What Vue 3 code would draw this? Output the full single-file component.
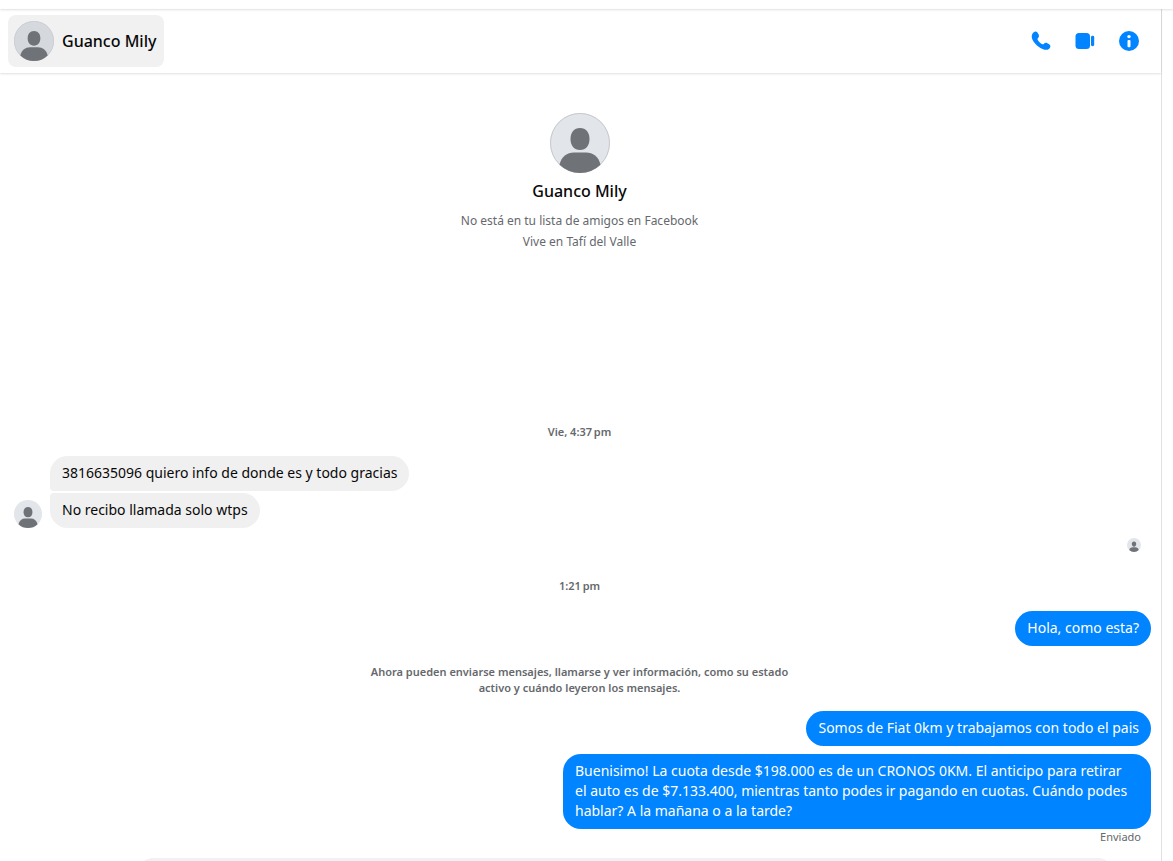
<script setup>
import { h, ref } from "vue";

const contact = {
  name: "Guanco Mily",
  details: ["No está en tu lista de amigos en Facebook", "Vive en Tafí del Valle"]
};

const draft = ref("");

const received = ["3816635096 quiero info de donde es y todo gracias", "No recibo llamada solo wtps"];

const sent = [
  "Somos de Fiat 0km y trabajamos con todo el pais",
  "Buenisimo! La cuota desde $198.000 es de un CRONOS 0KM. El anticipo para retirar el\u00a0auto es de $7.133.400, mientras tanto podes ir pagando en cuotas. Cuándo podes hablar? A la mañana o a la tarde?"
];

// generic silhouette used wherever the contact has no photo
const Avatar = (props) =>
  h("svg", { viewBox: "0 0 60 60", "aria-hidden": "true" }, [
    h("circle", { cx: 30, cy: 30, r: 30, fill: props.dim ? "#d5d8dc" : "#e2e5e9" }),
    h("path", {
      d: "M30 15c6 0 9.500 4.500 9.500 11S36 37 30 37s-9.500-4.500-9.500-11S24 15 30 15z",
      fill: "#6f7378"
    }),
    props.ring
      ? h("circle", { cx: 30, cy: 30, r: 29.5, fill: "none", stroke: "#c6c9cd", "stroke-width": 1 })
      : null,
    h("path", {
      d: "M24 39.500h12c7 0 12.500 4 14.500 12.200A29.900 29.900 0 0 1 30 60a29.900 29.900 0 0 1-20.500-8.300C11.500 43.500 17 39.500 24 39.500z",
      fill: "#6f7378"
    })
  ]);
Avatar.props = { ring: Boolean, dim: Boolean };
</script>

<template>
  <div class="page">
    <div class="top-strip"></div>
    <main class="chat">
      <header class="chat-header">
        <button type="button" class="contact">
          <Avatar class="avatar avatar-header" ring dim />
          <span>{{ contact.name }}</span>
        </button>
        <div class="actions">
          <button type="button" class="action" aria-label="Llamar">
            <svg viewBox="0 0 20 20">
              <path
                d="M1.900 2C3 .8 4.200.2 5.400.8c1.200.6 2 2 2.400 3.300.4 1.300 0 2.200-.8 3-.6.6-.6 1.200-.2 1.900 1 1.700 2.300 3 4 4 .7.4 1.300.5 1.900-.1.900-.9 1.800-1.400 3.100-1 1.400.4 2.900 1.300 3.400 2.500.5 1.300-.1 2.500-1.300 3.500-2.200 1.800-6.200.9-9.900-1.900C5.300 14 2.500 11.100 1.300 8.200.4 6.100.5 3.700 1.900 2z"
              />
            </svg>
          </button>
          <button type="button" class="action" aria-label="Videollamada">
            <svg viewBox="0 0 20 20">
              <rect x="0.5" y="2" width="14.5" height="16" rx="3.500" />
              <rect x="16" y="4.800" width="3.200" height="10.400" rx="1.400" />
            </svg>
          </button>
          <button type="button" class="action" aria-label="Información">
            <svg viewBox="0 0 20 20">
              <circle cx="10" cy="10" r="10" />
              <circle class="mark" cx="10" cy="5.600" r="1.700" />
              <rect class="mark" x="8.500" y="9" width="3" height="7.200" rx="1" />
            </svg>
          </button>
        </div>
      </header>

      <section class="feed">
        <div class="profile">
          <Avatar class="avatar avatar-profile" ring />
          <h1>{{ contact.name }}</h1>
          <p v-for="line in contact.details" :key="line">{{ line }}</p>
        </div>

        <time class="stamp stamp-first">Vie, 4:37&#8239;pm</time>
        <div class="received">
          <Avatar class="avatar avatar-message" />
          <div class="received-list">
            <div v-for="text in received" :key="text" class="bubble bubble-in">{{ text }}</div>
          </div>
        </div>
        <Avatar class="avatar avatar-seen" />

        <time class="stamp">1:21&#8239;pm</time>
        <div class="bubble bubble-out">Hola, como esta?</div>
        <p class="notice">
          Ahora pueden enviarse mensajes, llamarse y ver información, como su estado activo y cuándo
          leyeron los mensajes.
        </p>
        <div class="sent-list">
          <div v-for="text in sent" :key="text" class="bubble bubble-out">{{ text }}</div>
        </div>
        <span class="status">Enviado</span>
      </section>

      <footer class="composer">
        <input v-model="draft" type="text" aria-label="Mensaje" />
      </footer>
    </main>
  </div>
</template>

<style>
body {
  margin: 0;
  background: #fff;
}
</style>

<style scoped>
.page {
  height: 100vh;
  overflow: hidden;
  display: flex;
  flex-direction: column;
  color: #080809;
  font-family: "Segoe UI", "Noto Sans", sans-serif;
  font-size: 14px;
  line-height: 20px;
}

.top-strip {
  flex: none;
  height: 9px;
  z-index: 1;
  box-shadow: 0 1px 2px rgba(0, 0, 0, 0.12);
}

.chat {
  flex: 1;
  min-height: 0;
  margin-right: 11px;
  border-right: 1px solid #dfe0e2;
}

.chat-header {
  display: flex;
  align-items: center;
  justify-content: space-between;
  height: 64px;
  padding: 0 22px 0 8px;
  box-sizing: border-box;
  box-shadow: 0 1px 2px rgba(0, 0, 0, 0.12);
}

button {
  border: 0;
  background: none;
  color: inherit;
  font: inherit;
  cursor: pointer;
}

.contact {
  display: flex;
  align-items: center;
  gap: 8px;
  padding: 6px 8px 6px 6px;
  border-radius: 8px;
  background: #f1f1f1;
  font-size: 16px;
  font-weight: 500;
}

.avatar {
  display: block;
  flex: none;
}

.avatar-header {
  width: 40px;
  height: 40px;
}

.avatar-profile {
  width: 60px;
  height: 60px;
}

.avatar-message {
  width: 28px;
  height: 28px;
}

.avatar-seen {
  width: 14px;
  height: 14px;
  align-self: flex-end;
  margin: 10px 10px 0 0;
}

.actions {
  display: flex;
  gap: 24px;
}

.action {
  padding: 0;
}

.action svg {
  display: block;
  width: 20px;
  height: 20px;
  fill: #0084ff;
}

.action .mark {
  fill: #fff;
}

.feed {
  display: flex;
  flex-direction: column;
  padding: 40px 10px 0 8px;
}

.profile {
  display: flex;
  flex-direction: column;
  align-items: center;
  color: #65686c;
  font-size: 12px;
  line-height: 21px;
}

.profile h1 {
  margin: 8px 0 9px;
  color: #080809;
  font-size: 16px;
  font-weight: 500;
  line-height: 20px;
}

.profile p {
  margin: 0;
}

.stamp,
.notice {
  color: #65686c;
  font-size: 11px;
  font-weight: 600;
  line-height: 16px;
  text-align: center;
}

.stamp {
  margin: 26px 0 17px;
}

.stamp-first {
  margin: 172px 0 16px;
}

.received {
  display: flex;
  align-items: flex-end;
  gap: 8px;
  padding-left: 6px;
}

.received-list {
  display: flex;
  flex-direction: column;
  align-items: flex-start;
  gap: 2px;
}

.bubble {
  box-sizing: border-box;
  max-width: 588px;
  padding: 7px 12px 8px;
  border-radius: 18px;
}

.bubble-in {
  background: #f0f0f0;
}

.bubble-in:first-child {
  border-bottom-left-radius: 4px;
}

.bubble-in:last-child {
  border-top-left-radius: 4px;
}

.bubble-out {
  align-self: flex-end;
  background: #0084ff;
  color: #fff;
}

.notice {
  max-width: 440px;
  margin: 18px auto 15px;
}

.sent-list {
  display: flex;
  flex-direction: column;
  gap: 8px;
}

.status {
  align-self: flex-end;
  margin-right: 10px;
  color: #65686c;
  font-size: 11px;
  line-height: 16px;
}

.composer {
  display: flex;
  padding: 13px 46px 12px 136px;
}

.composer input {
  flex: 1;
  height: 36px;
  padding: 0 12px;
  border: 0;
  border-radius: 18px;
  background: #f0f0f5;
  font: inherit;
}
</style>
